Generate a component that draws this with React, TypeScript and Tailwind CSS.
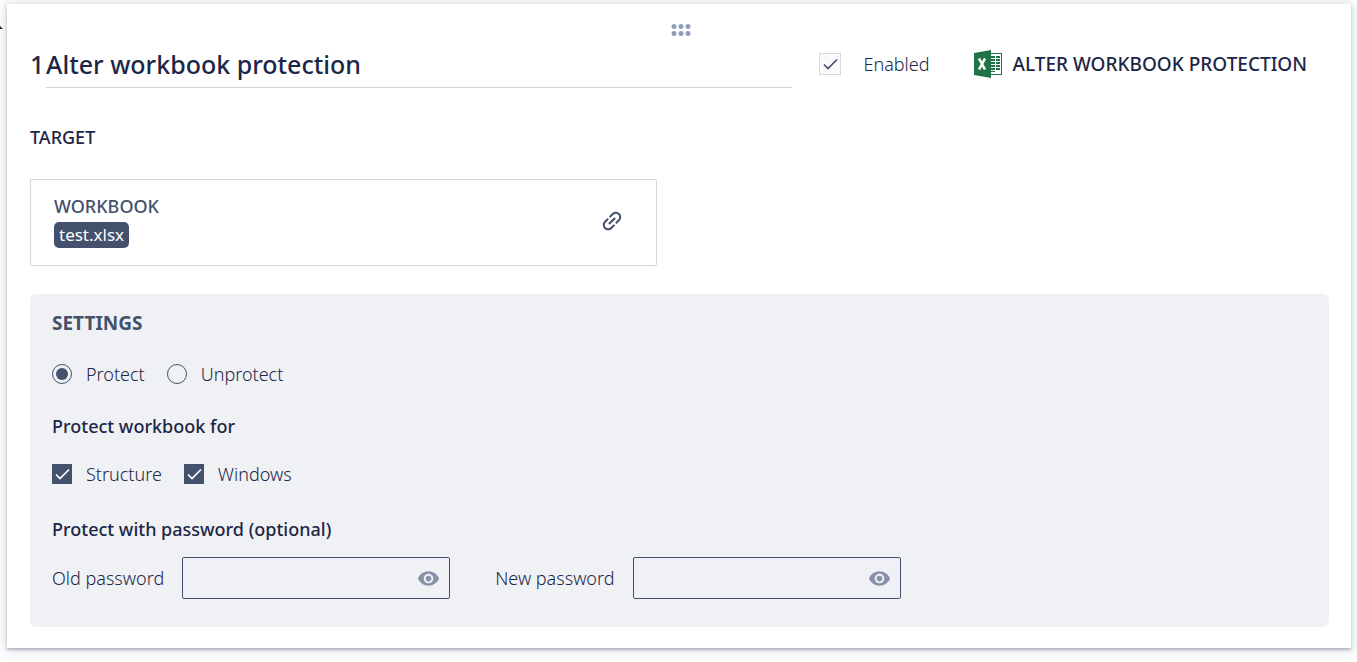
import { useState, type ReactNode } from "react";
import { MdLink, MdVisibility } from "react-icons/md";

const ExcelIcon = () => (
  <svg width="28" height="28" viewBox="0 0 28 28" aria-hidden="true">
    <path d="M16 3h12v22H16z" fill="#217346" />
    <path d="M17 4h10v20H17z" fill="#fff" />
    <path
      d="M17 6h4v2h-4zM22 6h4v2h-4zM17 9h4v2h-4zM22 9h4v2h-4zM17 12h4v2h-4zM22 12h4v2h-4zM17 15h4v2h-4zM22 15h4v2h-4zM17 18h4v2h-4zM22 18h4v2h-4zM17 21h4v1h-4z"
      fill="#217346"
    />
    <path d="M0 3L17 0v28L0 25z" fill="#217346" />
    <path d="M5 8.500L11 19.500M11 8.500L5 19.500" stroke="#fff" strokeWidth="2.600" />
  </svg>
);

const DragHandle = () => (
  <button type="button" aria-label="Move action" className="cursor-grab">
    <svg width="20" height="12" viewBox="0 0 20 12" fill="#919dbe">
      {[3, 10, 17].map((x) => (
        <g key={x}>
          <circle cx={x} cy="2.500" r="2.500" />
          <circle cx={x} cy="9.500" r="2.500" />
        </g>
      ))}
    </svg>
  </button>
);

const Tick = ({ className = "" }) => (
  <svg
    viewBox="0 0 20 20"
    fill="none"
    stroke="currentColor"
    strokeWidth="1.700"
    className={`pointer-events-none invisible col-start-1 row-start-1 size-5 peer-checked:visible ${className}`}
  >
    <path d="M4 10.500l4 4L17 5.500" />
  </svg>
);

const Checkbox = ({ children }: { children: ReactNode }) => (
  <label className="flex items-center gap-[14px]">
    <span className="grid place-items-center">
      <input
        type="checkbox"
        defaultChecked
        className="peer col-start-1 row-start-1 size-5 appearance-none border border-[#44516c] checked:bg-[#44516c]"
      />
      <Tick className="text-white" />
    </span>
    {children}
  </label>
);

type RadioProps = {
  children: ReactNode;
  checked: boolean;
  onChange: () => void;
};

const Radio = ({ children, checked, onChange }: RadioProps) => (
  <label className="flex items-center gap-[14px]">
    <span className="grid place-items-center">
      <input
        type="radio"
        name="mode"
        checked={checked}
        onChange={onChange}
        className="peer col-start-1 row-start-1 size-5 appearance-none rounded-full border border-[#44516c]"
      />
      <span className="pointer-events-none invisible col-start-1 row-start-1 size-3 rounded-full bg-[#44516c] peer-checked:visible" />
    </span>
    {children}
  </label>
);

const PasswordField = ({ id, label }: { id: string; label: string }) => {
  const [visible, setVisible] = useState(false);

  return (
    <div className="flex items-center gap-[18px]">
      <label htmlFor={id}>{label}</label>
      <div className="flex h-[42px] w-[268px] items-center rounded-xs border border-[#44516c] pr-[9px]">
        <input
          id={id}
          type={visible ? "text" : "password"}
          className="h-full min-w-0 flex-1 bg-transparent px-3 outline-none"
        />
        <button
          type="button"
          aria-label={`Show ${label.toLowerCase()}`}
          onClick={() => setVisible(!visible)}
          className="text-[#8792a9]"
        >
          <MdVisibility size={23} />
        </button>
      </div>
    </div>
  );
};

export default function App() {
  const [mode, setMode] = useState("protect");

  return (
    <div className="relative overflow-hidden bg-white pt-1 pr-[6px] pb-[14px] pl-[7px] font-['Noto_Sans',sans-serif] text-lg leading-6 font-light text-[#1c2747]">
      <svg width="3" height="4" className="absolute top-[25px] left-0">
        <path d="M0 1l3 3H0" fill="#222" />
      </svg>
      <main className="bg-white pr-[22px] pb-[21px] pl-[23px] shadow-[0_2px_2px_rgba(68,81,108,0.3),0_1px_10px_1px_rgba(68,81,108,0.25)]">
        <div className="flex h-9 items-end justify-center pb-1 pl-[3px]">
          <DragHandle />
        </div>

        <header className="flex h-12 items-center pr-[22px]">
          <div className="flex flex-1 items-center self-stretch text-[25px] font-medium">
            <label htmlFor="title" className="w-4 shrink-0">
              1
            </label>
            <input
              id="title"
              defaultValue="Alter workbook protection"
              className="h-full min-w-0 flex-1 border-b border-[#d0d3de] outline-none"
            />
          </div>
          <label className="ml-[27px] flex items-center gap-[22px]">
            <span className="grid place-items-center">
              <input
                type="checkbox"
                defaultChecked
                className="peer col-start-1 row-start-1 size-[22px] appearance-none border border-[#d8d9df] bg-[#fafafa]"
              />
              <Tick className="text-[#44516c]" />
            </span>
            Enabled
          </label>
          <div className="ml-11 flex items-center gap-[11px] text-[19px] font-medium">
            <ExcelIcon />
            ALTER WORKBOOK PROTECTION
          </div>
        </header>

        <h2 className="mt-[37px] font-medium">TARGET</h2>

        <section className="mt-[30px] flex h-[87px] w-[627px] max-w-full items-center justify-between rounded-xs border border-[#d0d6e2] pr-[31px] pb-1 pl-[23px]">
          <div className="flex flex-col items-start gap-1">
            <h3 className="font-medium text-[#44516c]">WORKBOOK</h3>
            <span className="rounded-[5px] bg-[#44516c] px-[5px] py-px text-[17px] leading-6 font-normal text-white">
              test.xlsx
            </span>
          </div>
          <button type="button" aria-label="Link workbook" className="text-[#44516c]">
            <MdLink size={26} className="-rotate-45" />
          </button>
        </section>

        <section className="mt-7 rounded-md bg-[#f0f1f5] px-[22px] pt-[17px] pb-7">
          <h2 className="text-[19px] leading-6 font-bold text-[#44516c]">SETTINGS</h2>

          <div className="mt-[27px] flex gap-[22px]">
            <Radio checked={mode === "protect"} onChange={() => setMode("protect")}>
              Protect
            </Radio>
            <Radio checked={mode === "unprotect"} onChange={() => setMode("unprotect")}>
              Unprotect
            </Radio>
          </div>

          <h3 className="mt-7 font-medium">Protect workbook for</h3>
          <div className="mt-6 flex gap-[22px]">
            <Checkbox>Structure</Checkbox>
            <Checkbox>Windows</Checkbox>
          </div>

          <h3 className="mt-[31px] font-medium">Protect with password (optional)</h3>
          <div className="mt-4 flex flex-wrap gap-x-[45px] gap-y-3">
            <PasswordField id="old-password" label="Old password" />
            <PasswordField id="new-password" label="New password" />
          </div>
        </section>
      </main>
    </div>
  );
}
